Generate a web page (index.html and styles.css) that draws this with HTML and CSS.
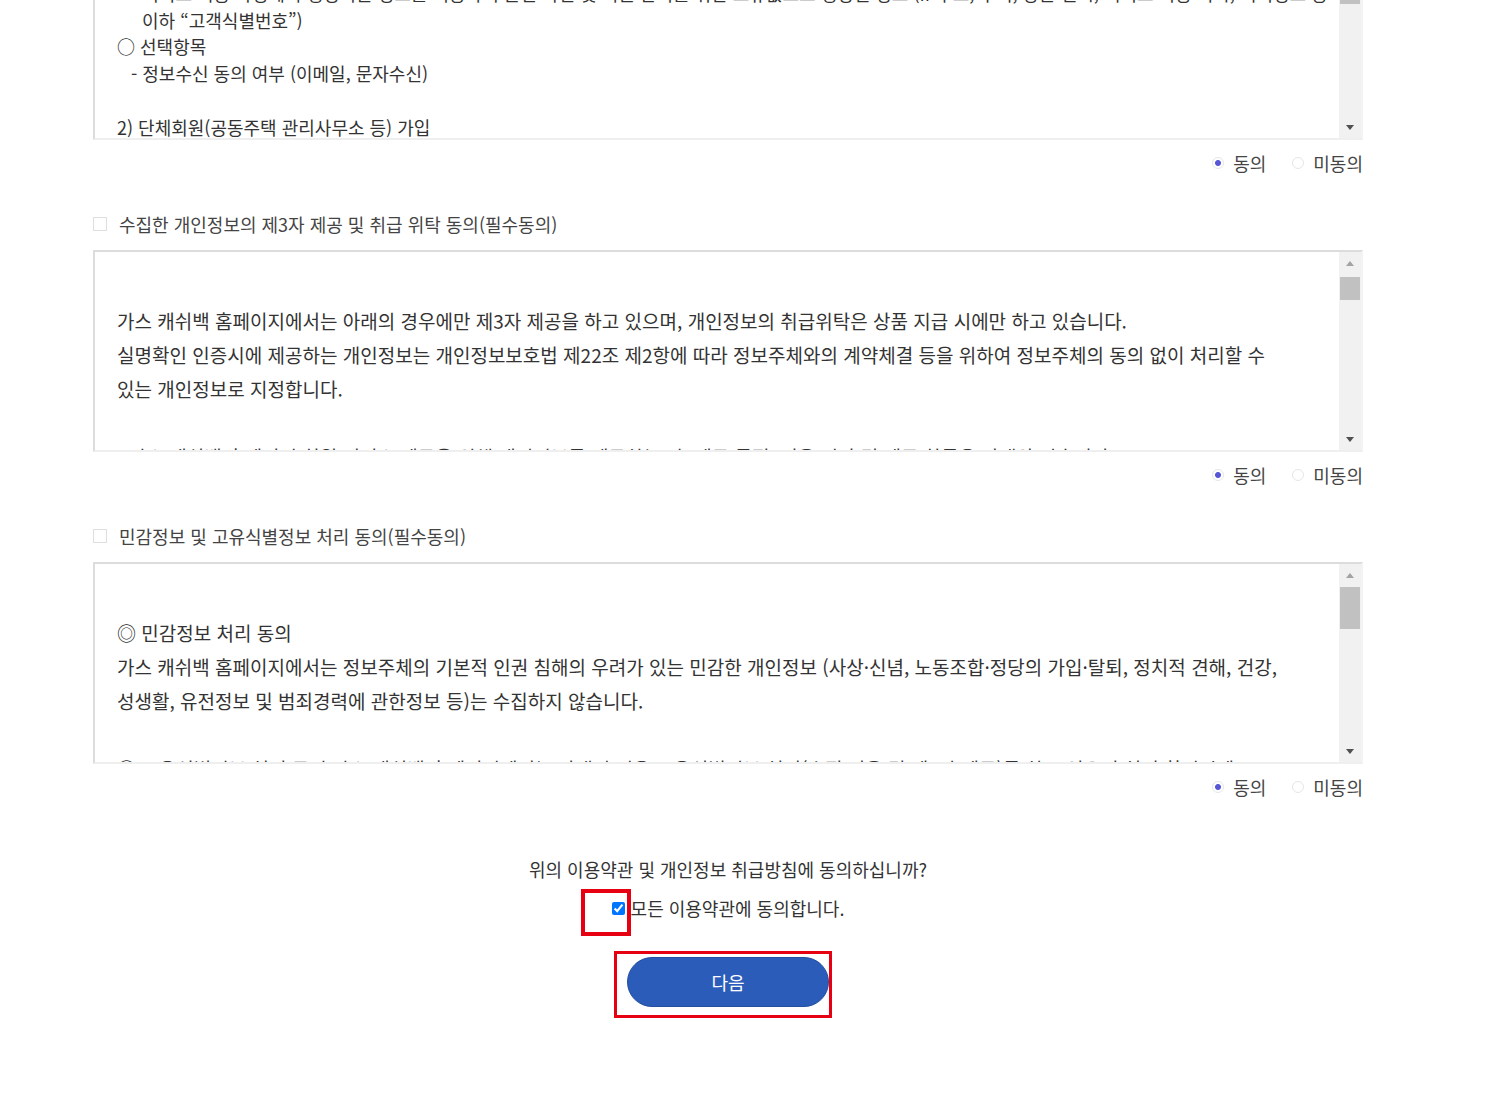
FILE: index.html
```html
<!DOCTYPE html>
<html lang="ko">
<head>
    <meta charset="UTF-8">
    <meta name="viewport" content="width=device-width, initial-scale=1.0">
    <title>약관 동의</title>
    <link rel="stylesheet" href="styles.css">
</head>
<body>
    <div class="wrap">
        <!-- 개인정보 수집 및 이용 -->
        <div class="term">
            <div class="term-box">
                <div class="term-text term-text-list">
                    <p class="sub">- 서비스 이용 과정에서 생성되는 정보를 이용하여 본인 확인 및 회원 관리를 위한 고유값으로 생성된 정보 (IP주소, 쿠키, 방문 일시, 서비스 이용 기록, 기기정보 등</p>
                    <p class="sub2">이하 “고객식별번호”)</p>
                    <p>○ 선택항목</p>
                    <p class="sub">- 정보수신 동의 여부 (이메일, 문자수신)</p>
                    <p>&nbsp;</p>
                    <p>2) 단체회원(공동주택 관리사무소 등) 가입</p>
                    <p>○ 필수항목</p>
                </div>
                <div class="scrollbar">
                    <span class="arrow arrow-up"></span>
                    <span class="track"><span class="thumb thumb-1"></span></span>
                    <span class="arrow arrow-down"></span>
                </div>
            </div>
            <div class="choice">
                <label><input type="radio" name="agree1" checked> 동의</label>
                <label><input type="radio" name="agree1"> 미동의</label>
            </div>
        </div>

        <!-- 제3자 제공 -->
        <div class="term">
            <label class="term-title"><input type="checkbox"> 수집한 개인정보의 제3자 제공 및 취급 위탁 동의(필수동의)</label>
            <div class="term-box">
                <div class="term-text">
                    <p>가스 캐쉬백 홈페이지에서는 아래의 경우에만 제3자 제공을 하고 있으며, 개인정보의 취급위탁은 상품 지급 시에만 하고 있습니다.<br>
                    실명확인 인증시에 제공하는 개인정보는 개인정보보호법 제22조 제2항에 따라 정보주체와의 계약체결 등을 위하여 정보주체의 동의 없이 처리할 수<br>
                    있는 개인정보로 지정합니다.</p>
                    <p>&nbsp;</p>
                    <p>- 가스 캐쉬백 홈페이지 회원 서비스 제공을 위해 개인정보를 제공하는 자, 제공 목적, 이용 기간 및 제공 항목은 아래와 같습니다.</p>
                </div>
                <div class="scrollbar">
                    <span class="arrow arrow-up"></span>
                    <span class="track"><span class="thumb thumb-2"></span></span>
                    <span class="arrow arrow-down"></span>
                </div>
            </div>
            <div class="choice">
                <label><input type="radio" name="agree2" checked> 동의</label>
                <label><input type="radio" name="agree2"> 미동의</label>
            </div>
        </div>

        <!-- 민감정보 및 고유식별정보 -->
        <div class="term">
            <label class="term-title"><input type="checkbox"> 민감정보 및 고유식별정보 처리 동의(필수동의)</label>
            <div class="term-box">
                <div class="term-text">
                    <p>◎ 민감정보 처리 동의<br>
                    가스 캐쉬백 홈페이지에서는 정보주체의 기본적 인권 침해의 우려가 있는 민감한 개인정보 (사상·신념, 노동조합·정당의 가입·탈퇴, 정치적 견해, 건강,<br>
                    성생활, 유전정보 및 범죄경력에 관한정보 등)는 수집하지 않습니다.</p>
                    <p>&nbsp;</p>
                    <p>◎ 고유식별정보 처리 동의 가스 캐쉬백 홈페이지에서는 아래의 경우 고유식별정보 처리(수집 이용 및 제3자 제공)를 하고 있으며 실명 확인시에</p>
                </div>
                <div class="scrollbar">
                    <span class="arrow arrow-up"></span>
                    <span class="track"><span class="thumb thumb-3"></span></span>
                    <span class="arrow arrow-down"></span>
                </div>
            </div>
            <div class="choice">
                <label><input type="radio" name="agree3" checked> 동의</label>
                <label><input type="radio" name="agree3"> 미동의</label>
            </div>
        </div>

        <div class="agree-all">
            <p class="question">위의 이용약관 및 개인정보 취급방침에 동의하십니까?</p>
            <label class="all-check">
                <span class="mark"><input type="checkbox" id="allAgree" checked></span>모든 이용약관에 동의합니다.
            </label>
            <div class="next-row">
                <div class="next-area"><button class="btn-next" id="next">다음</button></div>
            </div>
        </div>
    </div>
</body>
</html>
```

FILE: styles.css
```css
*, *::before, *::after {
    margin: 0;
    padding: 0;
    box-sizing: border-box;
}

body {
    font-family: "Noto Sans CJK KR", "Noto Sans", sans-serif;
    color: #333;
    background-color: #fff;
}

.wrap {
    width: 1270px;
    margin-left: 93px;
    margin-top: -62px;
}

/* 약관 박스 */
.term-box {
    display: flex;
    height: 202px;
    border: 2px solid;
    border-color: #dcdcdc #f3f3f3 #efefef #dcdcdc;
    background-color: #fff;
}

.term-text {
    flex: 1;
    overflow: hidden;
    padding: 52px 20px 0 22px;
    font-size: 19px;
    line-height: 34px;
    white-space: nowrap;
}

.term-text-list {
    padding-top: 40px;
    font-size: 18px;
    line-height: 26.7px;
}

.term-text-list .sub {
    padding-left: 14px;
}

.term-text-list .sub2 {
    padding-left: 25px;
}

/* 스크롤바 모양 */
.scrollbar {
    width: 22px;
    display: flex;
    flex-direction: column;
    background-color: #f1f1f1;
}

.arrow {
    height: 22px;
    display: flex;
    align-items: center;
    justify-content: center;
}

.arrow::before {
    content: "";
    border-left: 4px solid transparent;
    border-right: 4px solid transparent;
}

.arrow-up::before {
    border-bottom: 5px solid #a3a3a3;
}

.arrow-down::before {
    border-top: 5px solid #505050;
}

.track {
    flex: 1;
    padding: 0 1px;
}

.thumb {
    display: block;
    background-color: #c1c1c1;
}

.thumb-1 {
    margin-top: 1px;
    height: 41px;
}

.thumb-2 {
    margin-top: 3px;
    height: 23px;
}

.thumb-3 {
    margin-top: 1px;
    height: 42px;
}

/* 동의 / 미동의 */
.choice {
    display: flex;
    justify-content: flex-end;
    align-items: center;
    gap: 26px;
    height: 24px;
    margin-top: 11px;
    font-size: 18px;
    color: #444;
}

.choice label {
    display: flex;
    align-items: center;
    gap: 9px;
}

.choice input {
    -webkit-appearance: none;
    appearance: none;
    width: 12px;
    height: 12px;
    margin: 0;
    border: 1px solid #e6e6e6;
    border-radius: 50%;
    background-color: #fff;
}

.choice input:checked {
    background: radial-gradient(circle, #5656d8 0 2.5px, #fff 3.5px);
}

/* 약관 제목 */
.term-title {
    display: flex;
    align-items: center;
    gap: 12px;
    height: 26px;
    margin: 36px 0 13px;
    font-size: 18px;
    color: #444;
}

.term-title input {
    -webkit-appearance: none;
    appearance: none;
    width: 14px;
    height: 14px;
    margin: 0;
    border: 1px solid #dedede;
    background-color: #fff;
}

/* 전체 동의 */
.agree-all {
    margin-top: 57px;
    text-align: center;
    font-size: 18px;
    color: #333;
}

.question {
    line-height: 26px;
}

.all-check {
    display: inline-flex;
    align-items: center;
    margin-top: 13px;
    line-height: 26px;
}

.mark {
    position: relative;
    display: inline-flex;
}

.mark input {
    width: 13px;
    height: 13px;
    margin: 0 6px 0 0;
}

.mark::after {
    content: "";
    position: absolute;
    left: -31px;
    top: -13px;
    width: 50px;
    height: 47px;
    border: 4px solid #e60012;
}

.next-row {
    display: flex;
    justify-content: center;
    margin-top: 30px;
}

.next-area {
    margin-right: 10px;
    padding: 3px 0 8px 10px;
    border: 3px solid #e60012;
}

.btn-next {
    display: block;
    width: 202px;
    height: 50px;
    border: 1px solid #23509f;
    border-radius: 25px;
    background-color: #2c5cba;
    color: #fff;
    font-family: "Noto Sans CJK KR", "Noto Sans", sans-serif;
    font-size: 18px;
}
```
